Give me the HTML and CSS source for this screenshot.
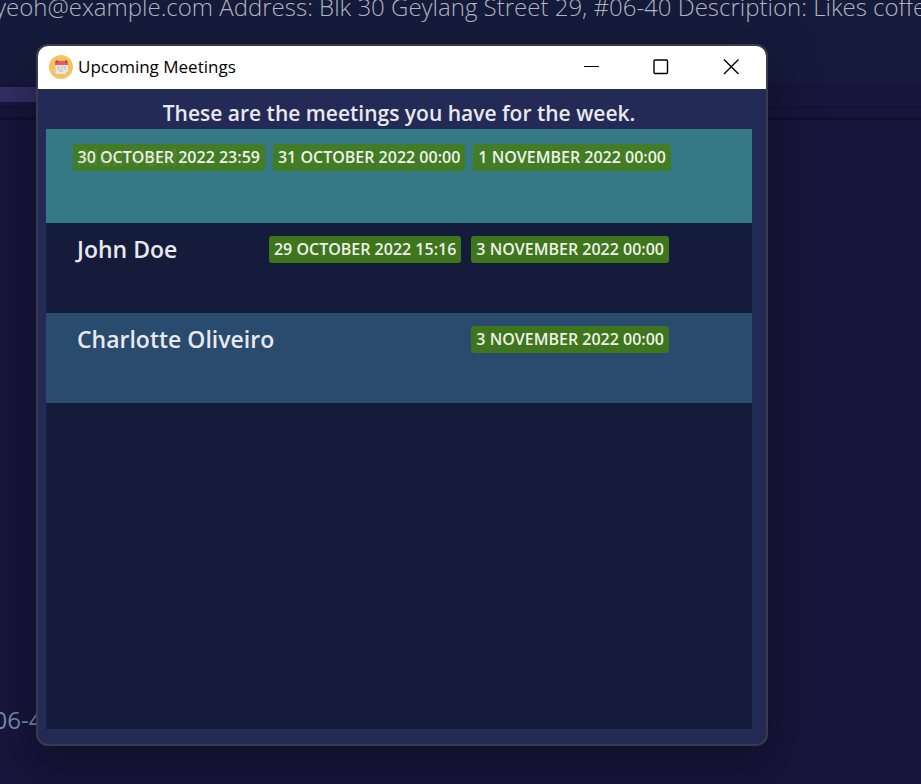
FILE: index.html
```
<!DOCTYPE html>
<html lang="en">
<head>
<meta charset="utf-8">
<title>Upcoming Meetings</title>
<link rel="stylesheet" href="styles.css">
</head>
<body>
<main class="desktop">
  <header class="contact">yeoh@example.com Address: Blk 30 Geylang Street 29, #06-40 Description: Likes coffee</header>
  <div class="scroll"><div class="thumb"></div></div>
  <div class="divider"></div>
  <section class="details"><p class="unit">#06-40</p></section>
</main>
<section class="window" aria-labelledby="title">
  <header class="titlebar">
    <svg class="logo" viewBox="0 0 24 24" aria-hidden="true">
      <circle cx="12" cy="12" r="12" fill="#f2c45f"/>
      <path d="M6 10h13v8l-2 1H6z" fill="#e9e6e2"/>
      <path d="M5 18l2-8v9H6z" fill="#d2cfcc"/>
      <path d="M6 6h13v4H6z" fill="#f0575a"/>
      <path d="M8 5v3M17 5v3" stroke="#75484a" stroke-width="1.2"/>
      <path d="M8 12h2M11 12h2M14 12h3M8 14h3M12 14h2M15 14h2M10 16h4" stroke="#bbb8b8" stroke-width="1"/>
      <path d="M16 19l3-3v2l-2 1z" fill="#bdb9b7"/>
    </svg>
    <h1 class="title" id="title">Upcoming Meetings</h1>
    <div class="controls">
      <button class="control" aria-label="Minimize"><svg viewBox="0 0 16 16"><path class="thin" d="M1 7.5h15"/></svg></button>
      <button class="control" aria-label="Maximize"><svg viewBox="0 0 16 16"><rect x="1" y="1" width="13.5" height="13.5" rx="1"/></svg></button>
      <button class="control" aria-label="Close"><svg viewBox="0 0 16 16"><path d="M1 .5l14.500 14.500M15.500 .5l-14.500 14.500"/></svg></button>
    </div>
  </header>
  <div class="content">
    <h2 class="heading">These are the meetings you have for the week.</h2>
    <ul class="list">
      <li class="row selected">
        <span class="name">Alex Yeoh</span>
        <div class="tags"><span class="tag">30 OCTOBER 2022 23:59</span><span class="tag">31 OCTOBER 2022 00:00</span><span class="tag">1 NOVEMBER 2022 00:00</span></div>
      </li>
      <li class="row">
        <span class="name">John Doe</span>
        <div class="tags"><span class="tag">29 OCTOBER 2022 15:16</span><span class="tag">3 NOVEMBER 2022 00:00</span></div>
      </li>
      <li class="row alternate">
        <span class="name">Charlotte Oliveiro</span>
        <div class="tags"><span class="tag">3 NOVEMBER 2022 00:00</span></div>
      </li>
    </ul>
  </div>
</section>
</body>
</html>
```
FILE: styles.css
```
* { box-sizing: border-box; }
body {
  margin: 0;
  height: 100vh;
  overflow: hidden;
  position: relative;
  background: #17153b;
  font-family: "Open Sans", "Noto Sans", sans-serif;
}
.desktop { height: 100%; display: flex; flex-direction: column; }
.contact {
  height: 82px;
  background: #151b3b;
  color: #b4b5bf;
  font-size: 24px;
  font-weight: 300;
  line-height: 14px;
  white-space: nowrap;
  text-indent: -5px;
}
.scroll { height: 26px; padding-top: 5px; border-bottom: 1px solid #100f2b; }
.thumb { width: 10%; height: 15px; background: #332f63; }
.divider { height: 12px; border-bottom: 3px solid #110f2d; }
.details { flex: 1; display: flex; align-items: flex-end; padding-bottom: 48px; }
.unit { margin: 0 0 0 -22px; color: #7890ad; font-size: 24px; line-height: 32px; }
.window {
  position: absolute;
  inset: 44px 153px 38px 36px;
  display: flex;
  flex-direction: column;
  border: 2px solid #3b3b4d;
  border-radius: 12px;
  overflow: hidden;
  background: #232a55;
  box-shadow: 0 16px 48px rgba(8, 12, 24, .5);
}
.titlebar {
  height: 43px;
  display: flex;
  align-items: center;
  padding-left: 11px;
  padding-bottom: 2px;
  background: #fff;
  color: #000;
}
.logo { width: 24px; height: 24px; margin-right: 5px; }
.title { margin: 0; font-size: 17px; font-weight: 400; line-height: 24px; }
.controls { display: flex; height: 100%; margin-left: auto; }
.control { width: 70px; padding: 0; border: 0; background: none; display: grid; place-items: center; }
.control svg { width: 16px; height: 16px; fill: none; stroke: #000; stroke-width: 1.4; }
.control .thin { stroke-width: 1; }
.content { flex: 1; display: flex; flex-direction: column; padding: 8px 14px 15px 8px; }
.heading {
  margin: 0;
  color: #e8e8ee;
  font-size: 21px;
  font-weight: 600;
  line-height: 32px;
  text-align: center;
}
.list { flex: 1; margin: 0; padding: 0; list-style: none; background: #151b3b; }
.row {
  height: 90px;
  display: grid;
  grid-template-columns: minmax(0, 1fr);
  align-items: start;
  padding: 13px 83px 0 31px;
  background: #151b3b;
}
.name, .tags { grid-area: 1 / 1; }
.name { color: #e8e8ee; font-size: 23px; font-weight: 600; line-height: 27px; }
.tags { display: flex; justify-content: flex-end; gap: 10px; }
.tag {
  padding: 0 5px;
  border-radius: 3px;
  background: #3f751c;
  color: #eef2ea;
  font-size: 16px;
  font-weight: 600;
  line-height: 27px;
  white-space: nowrap;
}
.alternate { background: #284b6e; }
.selected { height: 94px; padding: 15px 81px 0 31px; background: #367986; }
.selected .tags { gap: 8px; }
.selected .tag { background: #427c24; }
.selected .name { z-index: 1; color: rgba(130, 170, 100, .2); }
```
